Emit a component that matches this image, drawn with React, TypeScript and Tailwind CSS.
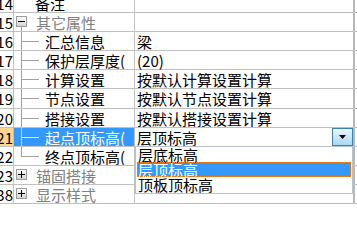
import React from "react";

type Row = {
  num: string;
  h: string;
  kind: "plain" | "group" | "leaf";
  name: string;
  value?: string;
  open?: boolean;
  last?: boolean;
  selected?: boolean;
  combo?: boolean;
};

const rows: Row[] = [
  { num: "14", h: "h-[19px] mt-[-6px]", kind: "plain", name: "备注" },
  { num: "15", h: "h-[19px]", kind: "group", name: "其它属性", open: true },
  { num: "16", h: "h-[19px]", kind: "leaf", name: "汇总信息", value: "梁" },
  { num: "17", h: "h-[19px]", kind: "leaf", name: "保护层厚度(", value: "(20)" },
  { num: "18", h: "h-[19px]", kind: "leaf", name: "计算设置", value: "按默认计算设置计算" },
  { num: "19", h: "h-[20px]", kind: "leaf", name: "节点设置", value: "按默认节点设置计算" },
  { num: "20", h: "h-[19px]", kind: "leaf", name: "搭接设置", value: "按默认搭接设置计算" },
  { num: "21", h: "h-[19px]", kind: "leaf", name: "起点顶标高(", value: "层顶标高", selected: true, combo: true },
  { num: "22", h: "h-[19px]", kind: "leaf", name: "终点顶标高(", last: true },
  { num: "23", h: "h-[19px]", kind: "group", name: "锚固搭接" },
  { num: "38", h: "h-[19px]", kind: "group", name: "显示样式" },
];

const options = ["层底标高", "层顶标高", "顶板顶标高"];

const ToggleBox = ({ open }: { open?: boolean }) => (
  <svg width="11" height="11" viewBox="0 0 11 11" className="block">
    <defs>
      <linearGradient id="tb" x1="0" y1="0" x2="0" y2="1">
        <stop offset="0" stopColor="#ffffff" />
        <stop offset="1" stopColor="#d2d2d2" />
      </linearGradient>
    </defs>
    <rect x="0.5" y="0.5" width="10" height="10" fill="url(#tb)" stroke="#9c9c9c" />
    <rect x="2" y="5" width="7" height="1" fill="#000" />
    {!open && <rect x="5" y="2" width="1" height="7" fill="#000" />}
  </svg>
);

const App = () => {
  return (
    <div className="h-[218px] w-[357px] overflow-hidden bg-white font-['Noto_Sans_CJK_SC',sans-serif] text-[15px] leading-none text-black">
      {rows.map((row) => (
        <div key={row.num} className={`flex border-b border-[#c0c0c0] ${row.h}`}>
          {/* row number */}
          <div
            className={`flex h-full w-[14px] items-center justify-end overflow-hidden border-r border-[#c0c0c0] ${
              row.selected ? "bg-[#ffd591]" : "bg-white"
            }`}
          >
            <span className="shrink-0 whitespace-nowrap">{row.num}</span>
          </div>

          {/* name */}
          <div
            className={`flex h-full w-[121px] items-center overflow-hidden whitespace-nowrap border-r border-[#c0c0c0] ${
              row.selected ? "bg-[#3399ff] text-white" : ""
            }`}
          >
            {row.kind === "plain" && <span className="pl-[21px]">{row.name}</span>}

            {row.kind === "group" && (
              <>
                <div className="ml-[2px] flex h-full w-[11px] flex-col">
                  <div className="h-[3px]" />
                  <ToggleBox open={row.open} />
                  <div className="flex-1">
                    {row.open && <div className="h-full w-[6px] border-r border-[#a0a0a0]" />}
                  </div>
                </div>
                <span className="ml-[9px] text-[#808080]">{row.name}</span>
              </>
            )}

            {row.kind === "leaf" && (
              <>
                <div className="ml-[7px] flex h-full w-[18px] shrink-0 flex-col">
                  <div
                    className={`h-[10px] border-b border-l ${
                      row.selected ? "border-l-[#c6dcf2] border-b-white" : "border-[#a0a0a0]"
                    }`}
                  />
                  {!row.last && (
                    <div
                      className={`flex-1 border-l ${row.selected ? "border-l-[#c6dcf2]" : "border-[#a0a0a0]"}`}
                    />
                  )}
                </div>
                <span className="ml-[6px]">{row.name}</span>
              </>
            )}
          </div>

          {/* value */}
          <div className="relative flex h-full w-[220px] items-center border-r-2 border-[#b8b8b8]">
            {row.value && <span className="pl-[2px] whitespace-nowrap">{row.value}</span>}

            {row.combo && (
              <>
                <div className="ml-auto flex h-full w-[21px] items-center justify-center border border-[#3c7fb1] bg-gradient-to-b from-[#eaf6fd] to-[#a7d8f4]">
                  <svg width="7" height="4" viewBox="0 0 7 4" className="block">
                    <path d="M0 0H7L3.5 4Z" fill="#000" />
                  </svg>
                </div>

                <div className="absolute left-0 top-full z-10 w-[218px] border border-[#b7c2ce] bg-white px-[1px] pb-[1px]">
                  {options.map((opt) => (
                    <div
                      key={opt}
                      className={`h-[15px] whitespace-nowrap pl-[1px] leading-[15px] ${
                        opt === "层顶标高"
                          ? "bg-[#3399ff] text-white outline-1 -outline-offset-1 outline-dotted outline-[#f08020]"
                          : ""
                      }`}
                    >
                      {opt}
                    </div>
                  ))}
                </div>
              </>
            )}
          </div>
        </div>
      ))}
    </div>
  );
};

export default App;
